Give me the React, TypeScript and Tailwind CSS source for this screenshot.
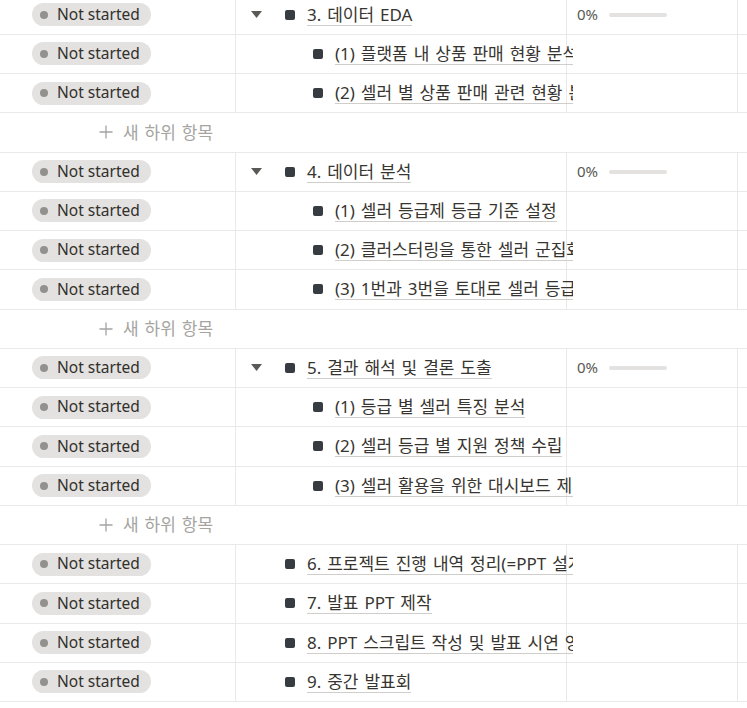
import React from "react";

type Row =
  | { kind: "add" }
  | { kind: "item"; level: 0 | 1; arrow?: boolean; text: string; progress?: boolean };

const rows: Row[] = [
  { kind: "item", level: 0, arrow: true, text: "3. 데이터 EDA", progress: true },
  { kind: "item", level: 1, text: "(1) 플랫폼 내 상품 판매 현황 분석" },
  { kind: "item", level: 1, text: "(2) 셀러 별 상품 판매 관련 현황 분석" },
  { kind: "add" },
  { kind: "item", level: 0, arrow: true, text: "4. 데이터 분석", progress: true },
  { kind: "item", level: 1, text: "(1) 셀러 등급제 등급 기준 설정" },
  { kind: "item", level: 1, text: "(2) 클러스터링을 통한 셀러 군집화" },
  { kind: "item", level: 1, text: "(3) 1번과 3번을 토대로 셀러 등급 분류" },
  { kind: "add" },
  { kind: "item", level: 0, arrow: true, text: "5. 결과 해석 및 결론 도출", progress: true },
  { kind: "item", level: 1, text: "(1) 등급 별 셀러 특징 분석" },
  { kind: "item", level: 1, text: "(2) 셀러 등급 별 지원 정책 수립" },
  { kind: "item", level: 1, text: "(3) 셀러 활용을 위한 대시보드 제작" },
  { kind: "add" },
  { kind: "item", level: 0, text: "6. 프로젝트 진행 내역 정리(=PPT 설계)" },
  { kind: "item", level: 0, text: "7. 발표 PPT 제작" },
  { kind: "item", level: 0, text: "8. PPT 스크립트 작성 및 발표 시연 영상" },
  { kind: "item", level: 0, text: "9. 중간 발표회" },
];

function Pill() {
  return (
    <div className="flex h-[23px] items-center rounded-full bg-[#e3e2e0] pl-[8px] pr-[11px]">
      <span className="mr-[9px] h-[8px] w-[8px] rounded-full bg-[#91918e]" />
      <span className="text-[15.5px] leading-none text-[#32302c]">Not started</span>
    </div>
  );
}

function ItemRow({ r }: { r: Extract<Row, { kind: "item" }> }) {
  return (
    <div className="flex h-[39.25px] border-b border-[#e9e9e7]">
      <div className="flex w-[236px] shrink-0 items-center border-r border-[#e9e9e7] pl-[32px]">
        <Pill />
      </div>
      <div className="relative z-10 flex w-[331px] shrink-0 items-center border-r border-[#e9e9e7]">
        <div className="flex w-[337px] shrink-0 items-center overflow-hidden whitespace-nowrap">
          {r.level === 0 ? (
            <>
              <span className="flex w-[49px] shrink-0 items-center pl-[15px]">
                {r.arrow ? (
                  <svg width="11" height="7" viewBox="0 0 11 7">
                    <path d="M0 0 L11 0 L5.5 7 Z" fill="#5a5955" />
                  </svg>
                ) : null}
              </span>
              <span className="h-[10px] w-[10px] shrink-0 rounded-[2px] bg-[#373c43]" />
            </>
          ) : (
            <span className="ml-[77px] h-[10px] w-[10px] shrink-0 rounded-[2px] bg-[#373c43]" />
          )}
          <span className="ml-[12px] border-b border-[#cfcecb] text-[17px] leading-[21px] text-[#37352f] [word-spacing:1.5px]">
            {r.text}
          </span>
        </div>
      </div>
      <div className="flex w-[171px] shrink-0 items-center border-r border-[#e9e9e7] pl-[10px]">
        {r.progress ? (
          <>
            <span className="text-[15px] leading-none text-[#5a5955]">0%</span>
            <span className="ml-[11px] h-[4px] w-[58px] rounded-full bg-[#e3e2e0]" />
          </>
        ) : null}
      </div>
      <div className="flex-1" />
    </div>
  );
}

function AddRow() {
  return (
    <div className="flex h-[39.25px] items-center border-b border-[#e9e9e7] pl-[99px] text-[#a5a4a1]">
      <svg width="14" height="14" viewBox="0 0 14 14" className="mr-[10px]">
        <path d="M7 0.5 V13.5 M0.5 7 H13.5" stroke="#a5a4a1" strokeWidth="1.3" />
      </svg>
      <span className="text-[17px] leading-none [word-spacing:1.5px]">새 하위 항목</span>
    </div>
  );
}

export default function App() {
  return (
    <div
      className="h-[708px] w-[747px] overflow-hidden bg-white"
      style={{ fontFamily: '"Noto Sans", "Noto Sans CJK KR", sans-serif' }}
    >
      <div className="-mt-[4.5px]">
        {rows.map((r, i) =>
          r.kind === "add" ? <AddRow key={i} /> : <ItemRow key={i} r={r} />
        )}
      </div>
    </div>
  );
}
